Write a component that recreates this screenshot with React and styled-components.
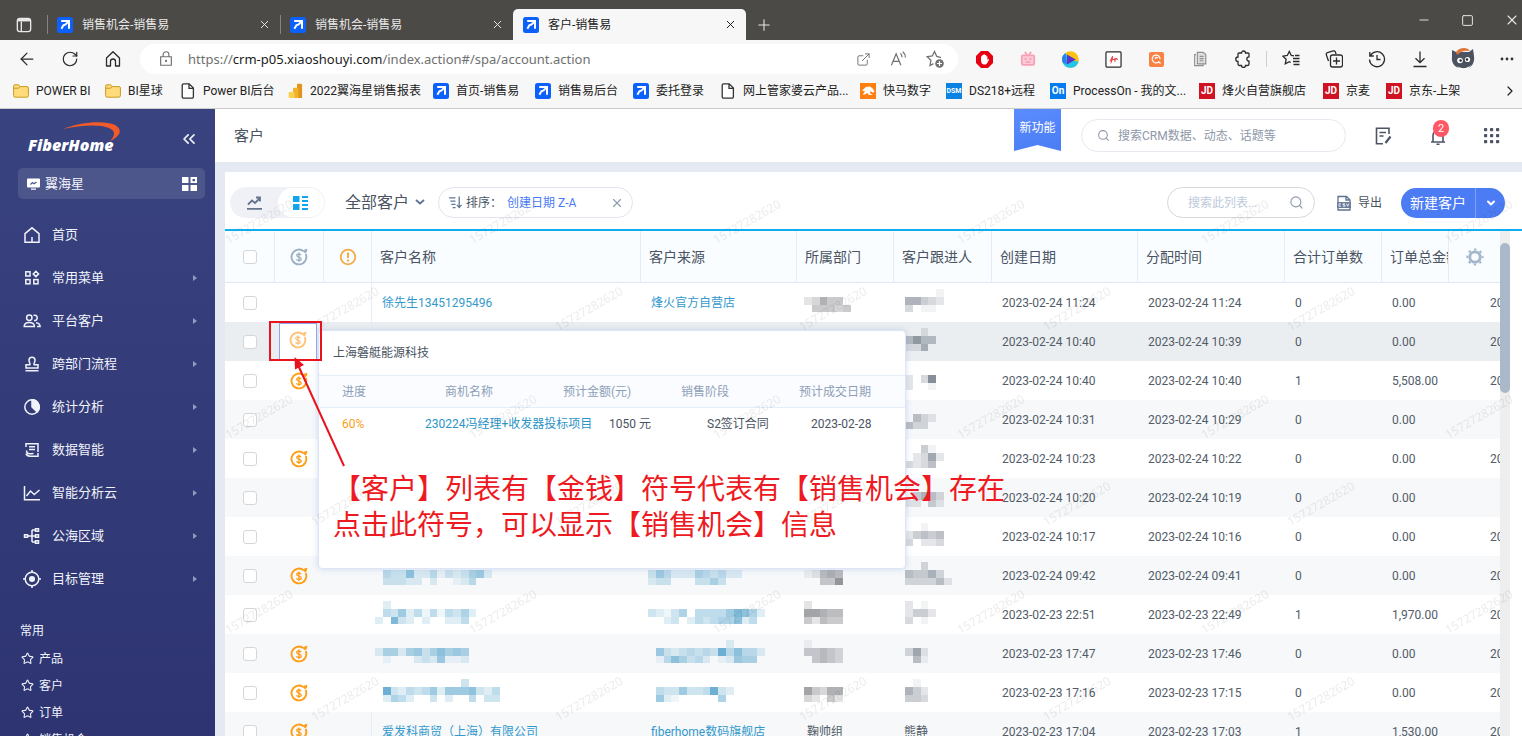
import styled, { createGlobalStyle, css } from 'styled-components';
import {
  ArrowLeft,
  ChevronDown,
  ChevronRight,
  ChevronsLeft,
  ExternalLink,
  Minus,
  Plus,
  RotateCw,
  Search,
  Square,
  Star,
  X,
} from 'lucide-react';

const GlobalStyle = createGlobalStyle`
  * {
    box-sizing: border-box;
  }

  body {
    margin: 0;
    overflow: hidden;
    font-family: Roboto, 'Noto Sans CJK SC', sans-serif;
    font-size: 12px;
    line-height: 18px;
    color: #4a5361;
  }

  button, input {
    font: inherit;
    color: inherit;
    padding: 0;
    border: none;
    background: none;
  }

  a {
    color: inherit;
    text-decoration: none;
  }

  svg {
    display: block;
    flex-shrink: 0;
  }
`;

/* ---------- data ---------- */

const BOOKMARKS = [
  { icon: 'folder', label: 'POWER BI', width: 92 },
  { icon: 'folder', label: 'BI星球', width: 75 },
  { icon: 'page', label: 'Power BI后台', width: 107 },
  { icon: 'bi', label: '2022翼海星销售报表', width: 146 },
  { icon: 'arrow', label: '首页-销售易', width: 102 },
  { icon: 'arrow', label: '销售易后台', width: 98 },
  { icon: 'arrow', label: '委托登录', width: 87 },
  { icon: 'page', label: '网上管家婆云产品...', width: 140 },
  { icon: 'horse', label: '快马数字', width: 86 },
  { icon: 'DSM', color: '#0a84e0', label: 'DS218+远程', width: 104 },
  { icon: 'On', color: '#067bef', label: 'ProcessOn - 我的文...', width: 149 },
  { icon: 'JD', color: '#cf1322', label: '烽火自营旗舰店', width: 124 },
  { icon: 'JD', color: '#cf1322', label: '京麦', width: 63 },
  { icon: 'JD', color: '#cf1322', label: '京东-上架', width: 100 },
];

const MENU = [
  { icon: 'home', label: '首页' },
  { icon: 'blocks', label: '常用菜单', more: true },
  { icon: 'users', label: '平台客户', more: true },
  { icon: 'stamp', label: '跨部门流程', more: true },
  { icon: 'pie', label: '统计分析', more: true },
  { icon: 'data', label: '数据智能', more: true },
  { icon: 'line', label: '智能分析云', more: true },
  { icon: 'tree', label: '公海区域', more: true },
  { icon: 'target', label: '目标管理', more: true },
];

const FAVORITES = ['产品', '客户', '订单', '销售机会'];

const COLUMNS = [
  { label: '客户名称', width: 269 },
  { label: '客户来源', width: 156 },
  { label: '所属部门', width: 97 },
  { label: '客户跟进人', width: 98 },
  { label: '创建日期', width: 146 },
  { label: '分配时间', width: 147 },
  { label: '合计订单数', width: 97 },
  { label: '订单总金额', width: 98 },
  { label: '', width: 120 },
];

// a masked value is a list of block lines, each digit being the strength of a block
const ROWS = [
  {
    name: '徐先生13451295496',
    source: '烽火官方自营店',
    dept: ['', '23644', '.44434'],
    owner: ['....1', '66432', '3.11'],
    created: '2023-02-24 11:24',
    assigned: '2023-02-24 11:24',
    orders: 0,
    total: '0.00',
    next: '20',
  },
  { hover: true, owner: ['..2', '5855', '226'], created: '2023-02-24 10:40', assigned: '2023-02-24 10:39', orders: 0, total: '0.00', next: '20' },
  { coin: true, owner: ['', '2.39', '2..1'], created: '2023-02-24 10:40', assigned: '2023-02-24 10:40', orders: 1, total: '5,508.00', next: '20' },
  { owner: ['', '.532', '533'], created: '2023-02-24 10:31', assigned: '2023-02-24 10:29', orders: 0, total: '0.00' },
  { coin: true, owner: ['..41', '.2372', '3235'], created: '2023-02-24 10:23', assigned: '2023-02-24 10:22', orders: 0, total: '0.00', next: '20' },
  { owner: ['', '.4653', '22.42'], created: '2023-02-24 10:20', assigned: '2023-02-24 10:19', orders: 0, total: '0.00' },
  { owner: ['..1', '24545', '3.223'], created: '2023-02-24 10:17', assigned: '2023-02-24 10:16', orders: 0, total: '0.00', next: '20' },
  {
    coin: true,
    name: ['', '.43372241323562', '.33322.2..124'],
    source: ['', '364222543422', '233...3353'],
    dept: ['', '12565', '..448'],
    owner: ['..3', '54463', '333352'],
    created: '2023-02-24 09:42',
    assigned: '2023-02-24 09:41',
    orders: 0,
    total: '0.00',
    next: '20',
  },
  {
    name: ['.2', '.436241414352', '2.832.2..224'],
    source: ['', '32135.444468752', '..23.243455724'],
    dept: ['2', '77655', '42544'],
    owner: ['2.1', '2442', '3.1'],
    created: '2023-02-23 22:51',
    assigned: '2023-02-23 22:49',
    orders: 1,
    total: '1,970.00',
    next: '20',
  },
  {
    coin: true,
    name: ['', '255256357565', '.1...2326112'],
    source: ['..........2', '.63234343947442', '.1475342.12655'],
    dept: ['1', '44543', '.4543'],
    owner: ['', '372', '.51'],
    created: '2023-02-23 17:47',
    assigned: '2023-02-23 17:46',
    orders: 0,
    total: '0.00',
    next: '20',
  },
  {
    coin: true,
    name: ['...........3', '.932434626667324', '.2542..3.2..4.33'],
    source: ['', '.4336334932', '.621.....5'],
    dept: ['', '74366', '32.42'],
    owner: ['.1', '642', '443'],
    created: '2023-02-23 17:16',
    assigned: '2023-02-23 17:15',
    orders: 0,
    total: '0.00',
    next: '20',
  },
  {
    coin: true,
    name: '爱发科商贸（上海）有限公司',
    source: 'fiberhome数码旗舰店',
    dept: '鞠帅组',
    owner: '熊静',
    created: '2023-02-23 17:04',
    assigned: '2023-02-23 17:03',
    orders: 1,
    total: '1,530.00',
    next: '20',
  },
];

/* ---------- drawings ---------- */

const ArrowLogo = () => (
  <svg width="16" height="16" viewBox="0 0 16 16">
    <rect width="16" height="16" rx="2.5" fill="#0d61fb" />
    <path d="M4.2 4h7.8v7.8M11.6 4.4 8.6 7.4 6.4 8.2 4.4 11.8" fill="none" stroke="#fff" strokeWidth="2" />
  </svg>
);

function BookmarkIcon({ type, color }) {
  if (type === 'arrow') return <ArrowLogo />;
  if (type === 'folder')
    return (
      <svg width="16" height="16" viewBox="0 0 16 16">
        <path d="M.6 3.2a1.4 1.4 0 0 1 1.4-1.4h3.6l1.6 1.8h6.8A1.4 1.4 0 0 1 15.4 5v7.6a1.6 1.6 0 0 1-1.6 1.6H2.2a1.6 1.6 0 0 1-1.6-1.6z" fill="#ffdb7a" stroke="#c99a20" />
        <path d="M1 5.2h4.6l1.6-1.5" fill="none" stroke="#c99a20" />
      </svg>
    );
  if (type === 'page')
    return (
      <svg width="14" height="16" viewBox="0 0 14 16">
        <path d="M2.6.8h5.6l4.2 4.3v8.6a1.4 1.4 0 0 1-1.4 1.4H2.6a1.4 1.4 0 0 1-1.4-1.4V2.2A1.4 1.4 0 0 1 2.6.8zM8 1v4.4h4.2" fill="#fff" stroke="#333" strokeWidth="1.3" />
      </svg>
    );
  if (type === 'bi')
    return (
      <svg width="15" height="16" viewBox="0 0 15 16">
        <path d="M9 1.6A.9.9 0 0 1 9.900.7h3.300a.9.9 0 0 1 .9.9V15H9z" fill="#e0941a" />
        <path d="M5 5.600a.9.9 0 0 1 .9-.9h3.700a.9.9 0 0 1 .9.9V15H5z" fill="#efb32a" />
        <path d="M.6 9.800a.9.9 0 0 1 .9-.9h4.100a.9.9 0 0 1 .9.9V15h-5a.9.9 0 0 1-.9-.9z" fill="#f8d052" />
      </svg>
    );
  if (type === 'horse')
    return (
      <svg width="16" height="16" viewBox="0 0 16 16">
        <rect width="16" height="16" fill="#ff7f0f" />
        <path d="M2 7.500 6 4l4-.6 3 2.400L14.600 9l-2.200.4L10.500 8l-.5 2.200 3 1.800H9L7.300 10l-2.500 1.500H2.600L5 8.600z" fill="#fff" />
      </svg>
    );
  return <LetterIcon $color={color} $small={type === 'DSM'}>{type}</LetterIcon>;
}

function MenuIcon({ type }) {
  const shapes = {
    home: <path d="M2 7.600 9 1.800l7 5.800v8.600H2zM9 16v-5" />,
    blocks: (
      <>
        <rect x="2.800" y="2.800" width="4.200" height="4.200" />
        <rect x="2.800" y="10.600" width="4.200" height="4.200" />
        <rect x="10.800" y="10.600" width="4.200" height="4.200" />
        <path d="m12.900 2.200 2.700 2.700-2.700 2.700-2.700-2.700z" />
      </>
    ),
    users: (
      <>
        <circle cx="6.300" cy="5.800" r="2.700" />
        <path d="M10.400 3.400a2.700 2.700 0 1 1 .6 5.100M1.200 14.500c0-2.800 2-4 5.100-4s5.100 1.200 5.100 4zM13 10.700c2.700.3 4.100 1.400 4.100 3.800h-3" />
      </>
    ),
    stamp: <path d="M6.900 9.800c.5-1.600-.9-2.600-.9-4.500a3 3 0 0 1 6 0c0 1.900-1.400 2.900-.9 4.500H15v3.200H3V9.800zM2.500 15.800h13" />,
    pie: (
      <>
        <circle cx="9" cy="9" r="7.200" />
        <path d="M9 1.800V9l5.200 5A7.200 7.200 0 0 0 9 1.800z" fill="currentColor" />
      </>
    ),
    data: <path d="M3 6V2.800h12V11M6 5.800h6M6 8.600h6M3.500 9.500c0 2 1 3 2.500 3.300 1.500.3 3-.3 4.500-.3M15 12v3.200H7c-2 0-3.500-1-4-2.700" />,
    line: <path d="M1.500 2v13.700h15.500M3.500 12l4-5 3.800 3.500L16.500 6" />,
    tree: <path d="M4.500 9H9M9 3v12M9 3h3M9 9h3M9 15h3M1.500 7.800h3v2.400h-3zM12.500 1.800h3v2.400h-3zM12.500 7.800h3v2.400h-3zM12.500 13.800h3v2.400h-3z" />,
    target: (
      <>
        <circle cx="9" cy="9" r="6.800" />
        <circle cx="9" cy="9" r="2.300" fill="currentColor" />
        <path d="M9 0v3M9 15v3M0 9h3M15 9h3" />
      </>
    ),
  };
  return (
    <svg width="18" height="18" viewBox="0 0 18 18" fill="none" stroke="currentColor" strokeWidth="1.5">
      {shapes[type]}
    </svg>
  );
}

const Coin = ({ color = '#ff9d14' }) => (
  <svg width="18" height="18" viewBox="0 0 18 18" fill="none" stroke={color}>
    <path d="M13.800 3.400A7.400 7.400 0 1 0 15.700 6" strokeWidth="1.900" />
    <path d="M13.400 3.800 14.400 1.600l3-.8-.6 3-1.500 1.600z" fill={color} stroke="none" />
    <path d="M11 7.200C10.700 6.300 9.900 6 8.800 6c-1.200 0-2.100.5-2.100 1.500 0 2.200 4.500 1.100 4.500 3.500 0 1.100-1 1.600-2.300 1.600-1.200 0-2.100-.4-2.400-1.300M8.900 4.500v9.600" strokeWidth="1.300" />
  </svg>
);

function Mosaic({ lines, color }) {
  const size = 7.8;
  const cols = Math.max(...lines.map((line) => line.length));
  return (
    <svg width={cols * 8} height="24" fill={color} shapeRendering="crispEdges" aria-hidden="true">
      {lines.map((line, y) =>
        [...line].map((c, x) =>
          c === '.' ? null : (
            <rect key={`${x}-${y}`} x={x * size} y={y * size} width={size} height={size} opacity={c / 11} />
          )
        )
      )}
    </svg>
  );
}

const FiberHomeLogo = () => (
  <svg width="96" height="36" viewBox="0 0 96 36">
    <path d="M36 8C52 1 78-1 88 4c9 5 4 12-5 16 5-5 6-10-1-13-9-4-28-3-46 1z" fill="#f15a29" />
    <text x="1" y="30" fill="#fff" fontFamily="'Open Sans', 'Liberation Sans', sans-serif" fontSize="16" fontWeight="800" fontStyle="italic">
      FiberHome
    </text>
  </svg>
);

const AvatarIcon = () => (
  <svg width="24" height="24" viewBox="0 0 24 24">
    <path d="M1 3l4 2h13l4-3 1 7c1 6-2 12-9 13C5 22 0 17 1 10z" fill="#4c5260" />
    <path d="M5 5C8 0 17 0 19 4c-5-1-9 0-13 4z" fill="#e0763c" />
    <circle cx="9" cy="13.500" r="2.800" fill="#fff" />
    <circle cx="16.500" cy="12.500" r="2.600" fill="#fff" />
    <circle cx="9.600" cy="13.500" r="1.200" fill="#222" />
    <circle cx="16" cy="12.500" r="1.200" fill="#222" />
    <path d="M6 19c4 3 10 3 14-1-3 6-10 7-14 1z" fill="#fff" />
  </svg>
);

const Stroke = ({ size = 18, width = 1.3, children }) => (
  <svg width={size} height={size} viewBox="0 0 18 18" fill="none" stroke="currentColor" strokeWidth={width}>
    {children}
  </svg>
);

const Watermark = () => (
  <WatermarkLayer aria-hidden="true">
    <defs>
      <pattern id="watermark" width="244" height="195" patternUnits="userSpaceOnUse">
        <g fill="#000" fillOpacity="0.08">
          <text x="34" y="54" textAnchor="middle" transform="rotate(-30 34 50)">15727282620</text>
          <text x="120" y="141" textAnchor="middle" transform="rotate(-30 120 137)">15727282620</text>
        </g>
      </pattern>
    </defs>
    <rect width="100%" height="100%" fill="url(#watermark)" />
  </WatermarkLayer>
);

/* ---------- browser ---------- */

function BrowserTab({ title, active }) {
  return (
    <Tab $active={active}>
      <ArrowLogo />
      <TabTitle>{title}</TabTitle>
      <IconButton aria-label="关闭标签页">
        <X size={13} strokeWidth={1.8} />
      </IconButton>
    </Tab>
  );
}

function BrowserChrome() {
  return (
    <header>
      <TabStrip>
        <PanelButton aria-label="标签页">
          <Stroke size={16} width={1.5}>
            <rect x="1.500" y="1.500" width="15" height="15" rx="3" />
            <path d="M2 3.500h14" strokeWidth="3" />
            <path d="M6 5v11" />
          </Stroke>
        </PanelButton>
        <BrowserTab title="销售机会-销售易" />
        <BrowserTab title="销售机会-销售易" />
        <BrowserTab title="客户-销售易" active />
        <NewTab aria-label="新建标签页">
          <Plus size={18} strokeWidth={1.4} />
        </NewTab>
        <WindowButtons>
          <IconButton aria-label="最小化"><Minus size={14} strokeWidth={1.6} /></IconButton>
          <IconButton aria-label="最大化"><Square size={13} strokeWidth={1.8} /></IconButton>
          <IconButton aria-label="关闭"><X size={16} strokeWidth={1.6} /></IconButton>
        </WindowButtons>
      </TabStrip>
      <AddressRow>
        <ToolCell aria-label="后退"><ArrowLeft size={20} strokeWidth={1.5} /></ToolCell>
        <ToolCell aria-label="刷新"><RotateCw size={18} strokeWidth={1.6} /></ToolCell>
        <ToolCell aria-label="主页">
          <Stroke>
            <path d="M2.500 8 9 1.800 15.500 8v8h-4v-4.500a2.500 2.500 0 0 0-5 0V16h-4z" strokeLinejoin="round" />
          </Stroke>
        </ToolCell>
        <Omnibox>
          <Stroke size={16}>
            <path d="M3 6.500h12v9.500H3zM5.800 6.500V4a3.200 3.200 0 0 1 6.400 0v2.500" />
            <circle cx="9" cy="11.200" r=".6" fill="currentColor" />
          </Stroke>
          <Url>
            https://<b>crm-p05.xiaoshouyi.com</b>/index.action#/spa/account.action
          </Url>
          <OmniboxIcons>
            <ExternalLink size={15} strokeWidth={1.5} />
            <Stroke size={17}>
              <path d="M1.500 15 6.500 3l5 12M3.200 11h6.600M11 2.500c1.200 1 1.700 2.500 1.700 4M13.500.8c2 1.600 2.800 3.700 2.800 6" />
            </Stroke>
            <Stroke>
              <path d="M15 7.600 10.800 6.500 8.500 1.500 6.300 6l-5.100.7 3.700 3.600-.9 5.200 3.500-1.800" />
              <circle cx="13.500" cy="13.500" r="4.300" fill="currentColor" stroke="none" />
              <path d="M13.500 11v5M11 13.500h5" stroke="#fff" strokeWidth="1.200" />
            </Stroke>
          </OmniboxIcons>
        </Omnibox>
        <ToolCell aria-label="拦截">
          <svg width="17" height="17" viewBox="0 0 17 17">
            <path d="M5 0h7l5 5v7l-5 5H5l-5-5V5z" fill="#e60012" />
            <path d="M5 9V5.200h1.200V4h1.300V3.200h1.400V4h1.300v1.200h1.200V9l1.300-1.300c.8.5 0 1.800-1 3.500-.9 1.700-1.500 2.300-3.300 2.300C6.200 13.500 5 12 5 9z" fill="#fff" />
          </svg>
        </ToolCell>
        <ToolCell aria-label="视频" $color="#f7a1b7">
          <Stroke size={16} width={2}>
            <rect x="2" y="5" width="14" height="10.500" rx="1.500" fill="#fbcbd7" />
            <path d="M5.500 1 8 4.500M12.500 1 10 4.500M5 8.500l2.500 1M13 8.500l-2.500 1M6.500 12.500h5" />
          </Stroke>
        </ToolCell>
        <ToolCell aria-label="播放">
          <svg width="17" height="17" viewBox="0 0 17 17">
            <circle cx="8.500" cy="8.500" r="8.300" fill="#ffc212" />
            <path d="M8.500 16.800A8.300 8.300 0 0 1 3.300 2L8 9l8.500 1.500a8.300 8.300 0 0 1-8 6.300z" fill="#22c7e8" />
            <path d="M3.300 2A8.300 8.300 0 0 0 1 12l4 1z" fill="#2d7fe6" />
            <path d="m5 3.600 8.800 4.900L5 13.500z" fill="#5b35c9" />
          </svg>
        </ToolCell>
        <ToolCell aria-label="Flash">
          <Stroke size={17}>
            <rect x="1" y="1" width="16" height="16" rx="1" fill="#fff" />
            <path d="M5 10.500c2-.5 2.500-4.500 3-4.500S6.500 13 6 12.500M7.500 9h2.500M10.500 7.500v4M10.500 9.500c1-2 2.500-2 2.500 0" stroke="#e5484d" />
          </Stroke>
        </ToolCell>
        <ToolCell aria-label="搜索">
          <svg width="15" height="15" viewBox="0 0 15 15" fill="none" stroke="#fff" strokeWidth="1.200">
            <rect width="15" height="15" rx="2" fill="#f98344" stroke="none" />
            <path d="m11.500 11.500-1.700-1.700A3.900 3.900 0 1 1 11 7.300M9 6a1.900 1.900 0 0 0-3 .8" />
          </svg>
        </ToolCell>
        <ToolCell aria-label="复制" $color="#8e8e8e">
          <Stroke size={16}>
            <path d="M4.500 4H3v12.500h9.500V15" />
            <path d="M6 1.500h6.500L15.500 4v10.500H6z" fill="#e0e0e0" />
            <path d="M8.500 6h4.500M8.500 8.500h4.500M8.500 11h4.500" />
          </Stroke>
        </ToolCell>
        <ToolCell aria-label="扩展">
          <Stroke>
            <path d="M5 3h2.500a2 2 0 0 1 4 0H14a1 1 0 0 1 1 1v2.800a2.200 2.200 0 0 0 0 4.400V14a1.500 1.500 0 0 1-1.500 1.500h-2a2 2 0 0 1-4 0H5.500A1.500 1.500 0 0 1 4 14v-2.600a2.200 2.200 0 0 1 0-4.400V4a1 1 0 0 1 1-1z" />
          </Stroke>
        </ToolCell>
        <Separator />
        <ToolCell aria-label="收藏夹">
          <Stroke>
            <path d="M12 5.800 9.300 5.500 7.300 1.500l-2 4-4.300.7 3.100 3-.8 4.600 4-2.100 1.400.8M11 8.500h6.500M11 11.500h6.500M13 5.500h4.500M11.500 14.500h6" />
          </Stroke>
        </ToolCell>
        <ToolCell aria-label="集锦">
          <Stroke>
            <path d="M3.500 11 1.300 4.800a1.800 1.800 0 0 1 1.200-2.200l5.800-1.700a1.800 1.800 0 0 1 2.200 1.300l.5 1.900M11.500 7.500v7M8 11h7" />
            <rect x="5.500" y="5" width="12" height="12" rx="2" />
          </Stroke>
        </ToolCell>
        <ToolCell aria-label="历史记录">
          <Stroke>
            <path d="M1.800 2v4h4M2.200 6A7.500 7.500 0 1 1 1.500 9.500M9 5v4.500h3.500" />
          </Stroke>
        </ToolCell>
        <ToolCell aria-label="下载">
          <Stroke>
            <path d="M9 1.500v11M4.500 8.200 9 12.700l4.500-4.500M2.500 16.500h13" />
          </Stroke>
        </ToolCell>
        <ToolCell aria-label="个人资料"><AvatarIcon /></ToolCell>
        <MoreTools aria-label="更多">
          <svg width="14" height="4" viewBox="0 0 14 4" fill="#333">
            <circle cx="2" cy="2" r="1.400" />
            <circle cx="7" cy="2" r="1.400" />
            <circle cx="12" cy="2" r="1.400" />
          </svg>
        </MoreTools>
      </AddressRow>
      <BookmarkBar>
        {BOOKMARKS.map((b) => (
          <Bookmark key={b.label} href="#" $width={b.width}>
            <BookmarkSlot><BookmarkIcon type={b.icon} color={b.color} /></BookmarkSlot>
            {b.label}
          </Bookmark>
        ))}
        <MoreBookmarks aria-label="更多书签"><ChevronRight size={16} strokeWidth={1.8} /></MoreBookmarks>
      </BookmarkBar>
    </header>
  );
}

/* ---------- crm ---------- */

function Sidebar() {
  return (
    <SidebarStyled>
      <Brand>
        <FiberHomeLogo />
        <IconButton aria-label="收起"><ChevronsLeft size={20} strokeWidth={2} /></IconButton>
      </Brand>
      <AppSwitch>
        <svg width="13" height="12" viewBox="0 0 13 12">
          <path d="M1 .5h11a1 1 0 0 1 1 1v7a1 1 0 0 1-1 1H1a1 1 0 0 1-1-1v-7a1 1 0 0 1 1-1zM4 10.500h5v1.200H4z" fill="#fff" />
          <path d="m3.500 6.500 2-2 1.500 1.300L9.500 4" fill="none" stroke="#4d568b" strokeWidth="1.200" />
        </svg>
        <span>翼海星</span>
        <svg width="15" height="14" viewBox="0 0 15 14" fill="#fff">
          <path d="M0 0h6.500v6H0zM0 8h6.500v6H0zM8.500 8H15v6H8.500zM8.500 0H15v6H8.500zM10.500 2v2.200H13V2z" fillRule="evenodd" />
        </svg>
      </AppSwitch>
      <nav>
        {MENU.map((item) => (
          <MenuItem key={item.label} href="#">
            <MenuIcon type={item.icon} />
            <span>{item.label}</span>
            {item.more && (
              <svg width="4" height="6" viewBox="0 0 4 6" fill="#949bc0"><path d="m0 0 4 3-4 3z" /></svg>
            )}
          </MenuItem>
        ))}
      </nav>
      <FavTitle>常用</FavTitle>
      {FAVORITES.map((label) => (
        <FavItem key={label} href="#">
          <Star size={13} strokeWidth={2} />
          {label}
        </FavItem>
      ))}
    </SidebarStyled>
  );
}

function PageHeader() {
  return (
    <PageHeaderStyled>
      <h1>客户</h1>
      <Ribbon href="#">新功能</Ribbon>
      <GlobalSearch>
        <Search size={13} strokeWidth={2} />
        <input aria-label="全局搜索" placeholder="搜索CRM数据、动态、话题等" />
      </GlobalSearch>
      <HeaderIcons>
        <IconButton aria-label="记录">
          <Stroke width={1.6}>
            <path d="M15 7V1.300H2.500v15.400h6.500M5.500 5.500h6.500M5.500 9h4" />
            <path d="m16.500 9.500-5 6.500" strokeWidth="2.200" />
          </Stroke>
        </IconButton>
        <BellButton aria-label="通知">
          <Stroke width={1.6}>
            <path d="M2 15h14M4 15V8.500a5 5 0 0 1 10 0V15M7.500 17.300h3" />
          </Stroke>
          <Badge>2</Badge>
        </BellButton>
        <IconButton aria-label="应用">
          <svg width="16" height="16" viewBox="0 0 16 16" fill="#4c5566">
            {[0, 6, 12].map((y) => [0, 6, 12].map((x) => <rect key={`${x}${y}`} x={x} y={y} width="3.200" height="3.200" rx=".8" />))}
          </svg>
        </IconButton>
      </HeaderIcons>
    </PageHeaderStyled>
  );
}

function ListToolbar() {
  return (
    <ListToolbarStyled>
      <ViewSwitch>
        <ViewButton aria-label="图表">
          <svg width="15" height="14" viewBox="0 0 15 14" fill="none" stroke="#66738c" strokeWidth="1.800">
            <path d="m1 8.500 4-4 3 2.500 4.500-4.500M9 1.500h4v4M0 12.800h15" />
          </svg>
        </ViewButton>
        <ViewButton aria-label="列表" $active>
          <svg width="15" height="14" viewBox="0 0 15 14" fill="#12a5ee">
            <path d="M0 0h6.500v6H0zM0 8h6.500v6H0zM9 0h6v2H9zM9 4h6v2H9zM9 8h6v2H9zM9 12h6v2H9z" />
          </svg>
        </ViewButton>
      </ViewSwitch>
      <ViewName>
        全部客户
        <svg width="10" height="10" viewBox="0 0 10 10" fill="none" stroke="#5f7896" strokeWidth="2">
          <path d="m1 2 4 3.500L9 2" />
        </svg>
      </ViewName>
      <SortPill>
        <svg width="13" height="13" viewBox="0 0 14 13" fill="none" stroke="#5f7896" strokeWidth="1.400">
          <path d="M0 1.500h7M1.500 5h5.500M2.500 8.500H7M4 12h3M11 0v12M8.500 9l2.500 3 2.500-3" />
        </svg>
        <span>排序：</span>
        <a href="#">创建日期 Z-A</a>
        <IconButton aria-label="清除排序"><X size={14} strokeWidth={2} color="#8e9db2" /></IconButton>
      </SortPill>
      <ListSearch>
        <input aria-label="搜索此列表" placeholder="搜索此列表..." />
        <Search size={15} strokeWidth={1.700} />
      </ListSearch>
      <ExportButton>
        <svg width="14" height="16" viewBox="0 0 14 16" fill="none" stroke="#5f7391">
          <path d="M1 7V1.500h8.500L13 5v2M1 13v2h12v-2M9 1.500V5h4" strokeWidth="1.300" />
          <path d="M0 7h14v6H0z" fill="#6b7f9c" stroke="none" />
          <path d="M4 8.800H2v2.400h2M8 8.800H6v1.200h2v1.200H6M9.500 8.500l1.200 2.700L12 8.500" stroke="#fff" strokeWidth=".8" />
        </svg>
        导出
      </ExportButton>
      <CreateGroup>
        <button>新建客户</button>
        <button aria-label="更多新建"><ChevronDown size={12} strokeWidth={4} /></button>
      </CreateGroup>
    </ListToolbarStyled>
  );
}

function Value({ value, color }) {
  return Array.isArray(value) ? <Mosaic lines={value} color={color} /> : value;
}

function CustomerTable() {
  return (
    <TableArea>
      <TableViewport>
        <Table>
          <colgroup>
            <col width="49" />
            <col width="49" />
            <col width="48" />
            {COLUMNS.map((c) => <col key={c.label} width={c.width} />)}
          </colgroup>
          <thead>
            <tr>
              <IconHead><Checkbox aria-label="全选" /></IconHead>
              <IconHead><Coin color="#9db0c3" /></IconHead>
              <IconHead>
                <svg width="18" height="18" viewBox="0 0 18 18" fill="none" stroke="#f5ab45" strokeWidth="1.800">
                  <circle cx="9" cy="9" r="7.300" />
                  <path d="M9 4.500v5.500M9 11.500v2" strokeWidth="2" />
                </svg>
              </IconHead>
              {COLUMNS.map((c) => <Head key={c.label}>{c.label}</Head>)}
            </tr>
          </thead>
          <tbody>
            {ROWS.map((row) => (
              <Row key={row.created + row.assigned} $hover={row.hover}>
                <IconCell><Checkbox aria-label="选择该行" /></IconCell>
                <IconCell>{row.coin && <Coin />}</IconCell>
                <IconCell />
                <Cell $link $line={!Array.isArray(row.name)} $mask={Array.isArray(row.name) ? 4 : 0}><Value value={row.name} color="#4e9fc9" /></Cell>
                <Cell $link $mask={Array.isArray(row.source) ? 8 : 0}><Value value={row.source} color="#4e9fc9" /></Cell>
                <Cell $mask={Array.isArray(row.dept) ? 8 : 0}><Value value={row.dept} color="#6d6f75" /></Cell>
                <Cell $mask={Array.isArray(row.owner) ? 12 : 0}><Value value={row.owner} color="#6d7684" /></Cell>
                <Cell>{row.created}</Cell>
                <Cell>{row.assigned}</Cell>
                <Cell>{row.orders}</Cell>
                <Cell>{row.total}</Cell>
                <Cell>{row.next}</Cell>
              </Row>
            ))}
          </tbody>
        </Table>
        <ColumnSettings aria-label="列设置">
          <svg width="18" height="18" viewBox="0 0 18 18" fill="none" stroke="#a3b7cb">
            <circle cx="9" cy="9" r="5.200" strokeWidth="2.800" />
            <circle cx="9" cy="9" r="7.600" strokeWidth="2" strokeDasharray="2.400 3.570" strokeDashoffset="1.200" />
          </svg>
        </ColumnSettings>
      </TableViewport>
      <ScrollTrack><ScrollThumb /></ScrollTrack>
    </TableArea>
  );
}

function OpportunityPopup() {
  return (
    <Popup>
      <h2>上海磐艇能源科技</h2>
      <PopupTable>
        <colgroup>
          <col width="106" />
          <col width="118" />
          <col width="118" />
          <col width="118" />
          <col />
        </colgroup>
        <thead>
          <tr>
            <PopupHead $pad={23}>进度</PopupHead>
            <PopupHead $pad={20}>商机名称</PopupHead>
            <PopupHead $pad={20}>预计金额(元)</PopupHead>
            <PopupHead $pad={20}>销售阶段</PopupHead>
            <PopupHead $pad={20}>预计成交日期</PopupHead>
          </tr>
        </thead>
        <tbody>
          <tr>
            <PopupCell $pad={23} $color="#f9a01b">60%</PopupCell>
            <PopupCell $pad={0} $color="#2b94c8"><a href="#">230224冯经理+收发器投标项目</a></PopupCell>
            <PopupCell $pad={66}>1050 元</PopupCell>
            <PopupCell $pad={46}>S2签订合同</PopupCell>
            <PopupCell $pad={32}>2023-02-28</PopupCell>
          </tr>
        </tbody>
      </PopupTable>
    </Popup>
  );
}

export default function App() {
  return (
    <>
      <GlobalStyle />
      <Window>
        <BrowserChrome />
        <Crm>
          <Sidebar />
          <Main>
            <PageHeader />
            <Card>
              <ListToolbar />
              <CustomerTable />
              <OpportunityPopup />
              <Watermark />
              <ActiveCoin aria-label="查看销售机会"><Coin color="#ffc274" /></ActiveCoin>
              <MarkBox />
              <MarkArrow width="60" height="116" viewBox="0 0 60 116">
                <path d="M55 111 9 10" stroke="#e8131e" strokeWidth="2" />
                <path d="M5.500 2 15 10 6 14.500z" fill="#e8131e" />
              </MarkArrow>
              <MarkText>
                【客户】列表有【金钱】符号代表有【销售机会】存在
                <br />
                点击此符号，可以显示【销售机会】信息
              </MarkText>
            </Card>
          </Main>
        </Crm>
      </Window>
    </>
  );
}

/* ---------- styles: browser ---------- */

const Window = styled.div`
  height: 100vh;
  display: flex;
  flex-direction: column;
  overflow: hidden;
`;

const IconButton = styled.button`
  display: flex;
  align-items: center;
  justify-content: center;
  flex-shrink: 0;
`;

const TabStrip = styled.div`
  height: 40px;
  display: flex;
  align-items: flex-end;
  background: #4b4a46;
  color: #e8e8e8;
`;

const PanelButton = styled(IconButton)`
  width: 47px;
  height: 31px;
`;

const Tab = styled.div`
  width: 233px;
  height: 31px;
  display: flex;
  align-items: center;
  gap: 9px;
  padding: 0 9px 0 10px;
  border-radius: 5px 5px 0 0;

  ${({ $active }) =>
    $active
      ? css`
          background: #f7f7f7;
          color: #1d1d1d;
        `
      : css`
          background: linear-gradient(#85847f, #85847f) left 6px / 1px 19px no-repeat;
        `}
`;

const TabTitle = styled.span`
  flex: 1;
  white-space: nowrap;
`;

const NewTab = styled(IconButton)`
  width: 36px;
  height: 31px;
`;

const WindowButtons = styled.div`
  margin-left: auto;
  align-self: flex-start;
  height: 40px;
  display: flex;
  gap: 30px;
  padding-right: 2px;
`;

const AddressRow = styled.div`
  height: 38px;
  display: flex;
  align-items: center;
  padding-left: 5px;
  background: #f7f7f7;
`;

const ToolCell = styled(IconButton)`
  width: 43px;
  height: 30px;
  color: ${({ $color }) => $color || '#2b2b2b'};
`;

const MoreTools = styled(ToolCell)`
  width: 38px;
  justify-content: flex-end;
  padding-right: 8px;
`;

const Separator = styled.span`
  width: 1px;
  height: 16px;
  margin: 0 2px;
  background: #cfcfcf;
`;

const Omnibox = styled.div`
  flex: 1;
  height: 30px;
  display: flex;
  align-items: center;
  gap: 14px;
  margin: 0 5px 0 6px;
  padding: 0 14px 0 18px;
  border-radius: 15px;
  background: #fff;
  color: #707070;
`;

const Url = styled.span`
  flex: 1;
  font-family: 'Noto Sans', sans-serif;
  font-size: 13px;
  white-space: nowrap;

  b {
    font-weight: 400;
    color: #1b1b1b;
  }
`;

const OmniboxIcons = styled.span`
  display: flex;
  align-items: center;
  gap: 19px;
`;

const BookmarkBar = styled.div`
  height: 31px;
  display: flex;
  align-items: center;
  padding: 0 4px 4px 13px;
  border-bottom: 1px solid #cbcbcb;
  background: #f7f7f7;
  color: #222;
`;

const Bookmark = styled.a`
  width: ${({ $width }) => $width}px;
  display: flex;
  flex-shrink: 0;
  align-items: center;
  gap: 7px;
  white-space: nowrap;
`;

const BookmarkSlot = styled.span`
  width: 16px;
  display: flex;
  justify-content: center;
`;

const LetterIcon = styled.span`
  width: 16px;
  height: 16px;
  flex-shrink: 0;
  background: ${({ $color }) => $color};
  color: #fff;
  font-size: ${({ $small }) => ($small ? 7 : 10)}px;
  font-weight: 700;
  line-height: 16px;
  text-align: center;
`;

const MoreBookmarks = styled(IconButton)`
  margin-left: auto;
`;

/* ---------- styles: crm frame ---------- */

const Crm = styled.div`
  flex: 1;
  min-height: 0;
  display: flex;
`;

const SidebarStyled = styled.aside`
  width: 215px;
  flex-shrink: 0;
  overflow: hidden;
  background: linear-gradient(#39437f, #2d3471);
  color: #f1f3fb;
`;

const Brand = styled.div`
  height: 59px;
  display: flex;
  align-items: center;
  justify-content: space-between;
  padding: 0 16px 0 27px;
`;

const AppSwitch = styled.div`
  height: 31px;
  display: flex;
  align-items: center;
  gap: 5px;
  margin: 0 10px 14px 18px;
  padding: 0 8px 0 9px;
  border-radius: 5px;
  background: #4d568b;
  font-size: 13px;

  span {
    flex: 1;
  }
`;

const MenuItem = styled.a`
  height: 43px;
  display: flex;
  align-items: center;
  gap: 11px;
  padding: 0 18px 0 23px;
  font-size: 13px;

  span {
    flex: 1;
  }
`;

const FavTitle = styled.div`
  margin-top: 18px;
  padding-left: 20px;
  line-height: 27px;
`;

const FavItem = styled.a`
  height: 27px;
  display: flex;
  align-items: center;
  gap: 5px;
  padding-left: 21px;
`;

const Main = styled.main`
  flex: 1;
  min-width: 0;
  display: flex;
  flex-direction: column;
  background: #e5e9f2;
`;

const PageHeaderStyled = styled.div`
  height: 53px;
  display: flex;
  align-items: center;
  padding: 0 22px 0 19px;
  background: #fff;

  h1 {
    margin: 0 auto 0 0;
    font-size: 15px;
    font-weight: 400;
  }
`;

const Ribbon = styled.a`
  width: 47px;
  height: 42px;
  align-self: flex-start;
  margin-right: 20px;
  background: linear-gradient(165deg, #5b8cff, #4a7cf3);
  clip-path: polygon(0 0, 100% 0, 100% 100%, 50% 86%, 0 100%);
  color: #fff;
  line-height: 38px;
  text-align: center;
`;

const GlobalSearch = styled.label`
  width: 265px;
  height: 33px;
  display: flex;
  align-items: center;
  gap: 8px;
  padding: 0 15px;
  border: 1px solid #e7e9f0;
  border-radius: 17px;
  color: #8e97a8;

  input {
    flex: 1;
    min-width: 0;
  }

  input::placeholder {
    color: #8e97a8;
  }
`;

const HeaderIcons = styled.div`
  display: flex;
  align-items: center;
  gap: 37px;
  margin-left: 28px;
  color: #4c5566;
`;

const BellButton = styled(IconButton)`
  position: relative;
`;

const Badge = styled.span`
  position: absolute;
  left: 4px;
  top: -7px;
  width: 16px;
  height: 17px;
  border-radius: 9px;
  background: #ff5766;
  color: #fff;
  font-size: 11px;
  line-height: 17px;
  text-align: center;
`;

/* ---------- styles: list ---------- */

const Card = styled.section`
  position: relative;
  flex: 1;
  min-height: 0;
  display: flex;
  flex-direction: column;
  margin: 10px 0 0 10px;
  background: #fff;
`;

const ListToolbarStyled = styled.div`
  height: 59px;
  display: flex;
  flex-shrink: 0;
  align-items: center;
  padding: 4px 17px 0 5px;
  border-bottom: 2px solid #10aef0;
`;

const ViewSwitch = styled.div`
  width: 95px;
  height: 31px;
  display: flex;
  border: 1px solid #eff1f7;
  border-radius: 16px;
  background: #eff1f7;
`;

const ViewButton = styled(IconButton)`
  flex: 1;
  border-radius: 15px;
  background: ${({ $active }) => ($active ? '#fff' : 'none')};
`;

const ViewName = styled.button`
  display: flex;
  align-items: center;
  gap: 6px;
  margin: 0 13px 0 20px;
  font-size: 16px;
`;

const SortPill = styled.div`
  width: 195px;
  height: 31px;
  display: flex;
  align-items: center;
  padding: 0 8px 0 10px;
  border: 1px solid #e2e5ee;
  border-radius: 16px;

  span {
    margin-left: 4px;
  }

  a {
    flex: 1;
    margin-left: 5px;
    color: #4a7bf5;
  }
`;

const ListSearch = styled.label`
  width: 148px;
  height: 31px;
  display: flex;
  align-items: center;
  margin-left: auto;
  padding: 0 10px 0 20px;
  border: 1px solid #d6d8dc;
  border-radius: 16px;
  color: #8a96a8;

  input {
    flex: 1;
    min-width: 0;
  }

  input::placeholder {
    color: #bccadb;
  }
`;

const ExportButton = styled.button`
  display: flex;
  align-items: center;
  gap: 7px;
  margin: 0 19px 0 22px;
`;

const CreateGroup = styled.div`
  height: 30px;
  display: flex;
  border-radius: 15px;
  background: #4b7cf3;
  color: #fff;

  button {
    width: 74px;
    display: flex;
    align-items: center;
    justify-content: center;
    font-size: 14px;
  }

  button + button {
    width: 30px;
    border-left: 1px solid #7fa2f7;
  }
`;

const TableArea = styled.div`
  flex: 1;
  min-height: 0;
  display: flex;
  padding-right: 12px;
`;

const TableViewport = styled.div`
  position: relative;
  flex: 1;
  min-width: 0;
  overflow: hidden;
`;

const Table = styled.table`
  width: 1374px;
  table-layout: fixed;
  border-collapse: separate;
  border-spacing: 0;
`;

const Head = styled.th`
  height: 52px;
  padding: 0 0 0 8px;
  border-left: 1px solid #e3ecf7;
  border-bottom: 1px solid #dfe8f4;
  background: #f9fdff;
  font-size: 14px;
  font-weight: 400;
  text-align: left;
  white-space: nowrap;
`;

const IconHead = styled(Head)`
  padding: 0;

  &:first-child {
    border-left: none;
  }

  svg, input {
    margin: 0 auto;
  }
`;

const Row = styled.tr`
  height: 39px;
  background: ${({ $hover }) => ($hover ? '#ebeef1' : '#fff')};

  &:nth-child(2n) {
    background: ${({ $hover }) => ($hover ? '#ebeef1' : '#f6f8fa')};
  }
`;

const Cell = styled.td`
  padding: 0 0 0 ${({ $line }) => ($line ? 10 : 11)}px;
  white-space: nowrap;
  overflow: hidden;
  color: ${({ $link }) => ($link ? '#3399cc' : '#525c68')};
  border-left: ${({ $line }) => ($line ? '1px solid #e6edf5' : 'none')};

  ${({ $mask }) =>
    $mask &&
    css`
      padding: 6px 0 0 ${$mask}px;
      vertical-align: top;
    `}
`;

const IconCell = styled.td`
  padding: 0;

  svg, input {
    margin: 0 auto;
  }
`;

const Checkbox = styled.input.attrs({ type: 'checkbox' })`
  display: block;
  width: 14px;
  height: 14px;
  appearance: none;
  border: 1px solid #d3d6db;
  border-radius: 3px;
  background: #fff;
`;

const ColumnSettings = styled(IconButton)`
  position: absolute;
  top: 0;
  right: 0;
  width: 52px;
  height: 52px;
  border-left: 1px solid #e3ecf7;
  border-bottom: 1px solid #dfe8f4;
  background: #f9fdff;
`;

const ScrollTrack = styled.div`
  width: 10px;
  padding-top: 12px;
  background: #eeeeee;
`;

const ScrollThumb = styled.div`
  height: 150px;
  border-radius: 5px;
  background: #a9b9c9;
`;

/* ---------- styles: popup and marks ---------- */

const Popup = styled.div`
  position: absolute;
  left: 93px;
  top: 158px;
  width: 588px;
  height: 239px;
  border: 1px solid #dce5f5;
  border-radius: 4px;
  background: #fff;
  box-shadow: 0 0 6px rgba(120, 150, 210, 0.3);

  h2 {
    margin: 0;
    padding-left: 14px;
    font-size: 12px;
    font-weight: 400;
    line-height: 44px;
  }
`;

const PopupTable = styled.table`
  width: 100%;
  table-layout: fixed;
  border-spacing: 0;
`;

const PopupHead = styled.th`
  height: 33px;
  padding: 0 0 0 ${({ $pad }) => $pad}px;
  border-top: 1px solid #e4eefa;
  border-bottom: 1px solid #e4eefa;
  background: #fafcff;
  color: #8ea0b8;
  font-weight: 400;
  text-align: left;
  white-space: nowrap;
`;

const PopupCell = styled.td`
  height: 32px;
  padding: 0 0 0 ${({ $pad }) => $pad}px;
  color: ${({ $color }) => $color || '#4a5361'};
  white-space: nowrap;
`;

const WatermarkLayer = styled.svg`
  position: absolute;
  inset: 0;
  width: 100%;
  height: 100%;
  pointer-events: none;
  font-family: 'Noto Sans', sans-serif;
  font-size: 12px;
`;

const ActiveCoin = styled(IconButton)`
  position: absolute;
  left: 54px;
  top: 151px;
  width: 38px;
  height: 37px;
  padding-bottom: 4px;
  border: 1px solid #8fa6f2;
  background: #fff;
`;

const MarkBox = styled.div`
  position: absolute;
  left: 44px;
  top: 149px;
  width: 53px;
  height: 40px;
  border: 2px solid #e8131e;
`;

const MarkArrow = styled.svg`
  position: absolute;
  left: 64px;
  top: 183px;
`;

const MarkText = styled.p`
  position: absolute;
  left: 108px;
  top: 297px;
  margin: 0;
  color: #ee1a22;
  font-family: 'Noto Sans CJK SC', sans-serif;
  font-size: 28px;
  line-height: 36px;
  white-space: nowrap;
`;
